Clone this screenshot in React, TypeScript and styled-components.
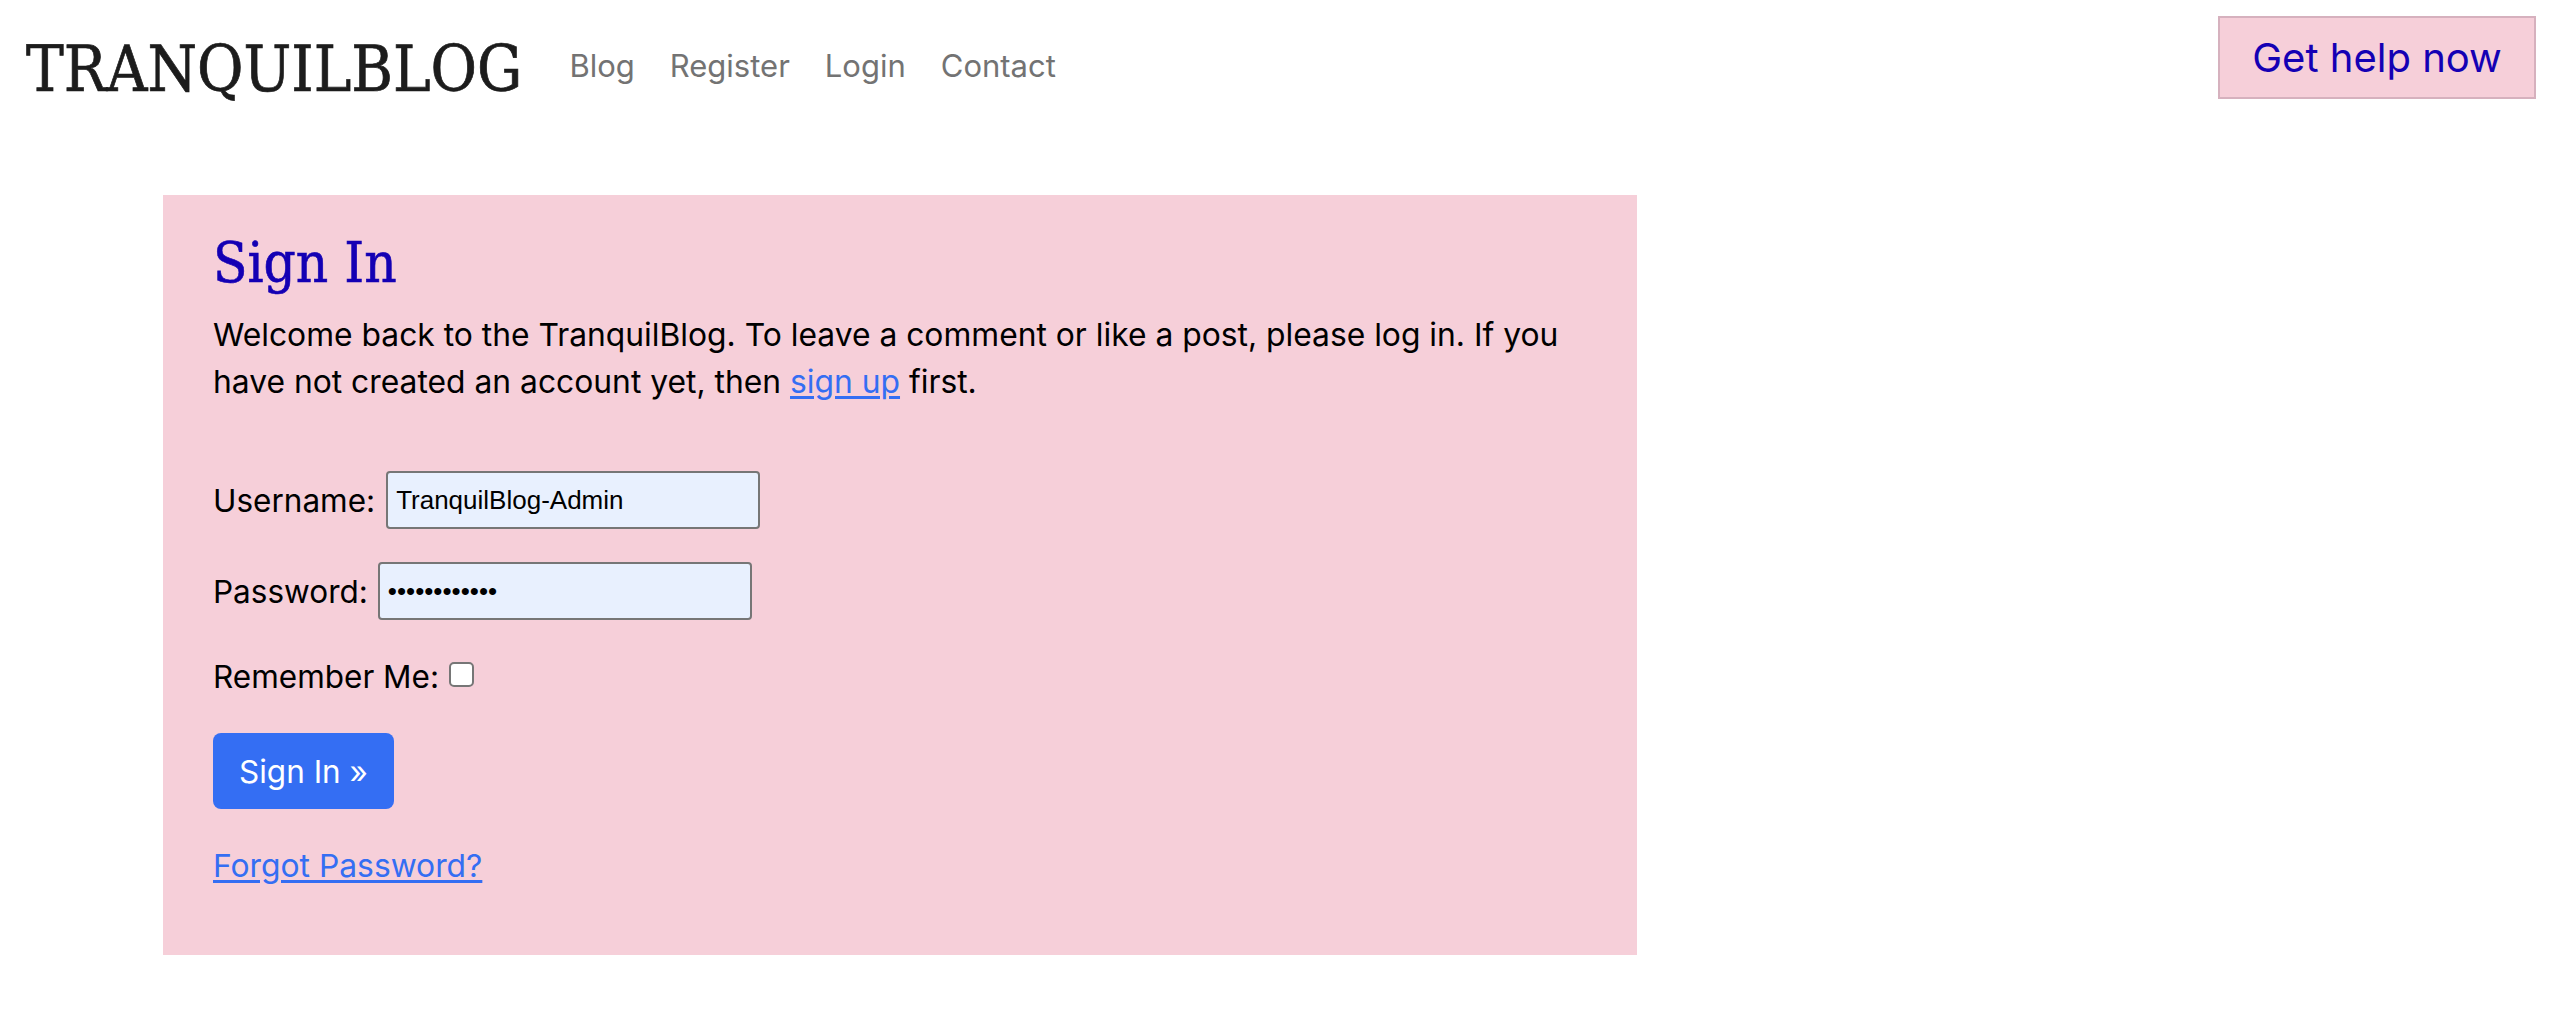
import React from "react";
import styled, { createGlobalStyle } from "styled-components";

const GlobalStyle = createGlobalStyle`
  html, body {
    margin: 0;
    padding: 0;
    background: #ffffff;
  }
  body {
    font-family: Inter, "Noto Sans", sans-serif;
    color: #000000;
  }
  * { box-sizing: border-box; }
`;

const Page = styled.div`
  width: 2559px;
  min-height: 1035px;
  display: flex;
  flex-direction: column;
`;

const Header = styled.header`
  display: flex;
  justify-content: space-between;
  align-items: flex-start;
  padding: 16px 23px 0 26px;
`;

const Brandline = styled.div`
  display: flex;
  align-items: flex-start;
`;

const Logo = styled.a`
  font-family: "DejaVu Serif Condensed", "DejaVu Serif", serif;
  font-stretch: condensed;
  font-size: 63px;
  line-height: 1;
  color: #1c1c1c;
  -webkit-text-stroke: 0.7px #1c1c1c;
  text-decoration: none;
  margin-top: 22px;
  margin-right: 47px;
  white-space: nowrap;
`;

const Nav = styled.nav`
  display: flex;
  gap: 35px;
  margin-top: 34px;
`;

const NavLink = styled.a`
  font-size: 31px;
  line-height: 1;
  color: #737373;
  text-decoration: none;
`;

const HelpButton = styled.a`
  display: flex;
  align-items: center;
  justify-content: center;
  width: 318px;
  height: 83px;
  background: #f6cfd9;
  border: 2px solid #d6b1be;
  color: #1400b4;
  font-size: 40px;
  text-decoration: none;
`;

const Main = styled.main`
  padding: 0 0 0 163px;
  margin-top: 94px;
`;

const Card = styled.section`
  width: 1474px;
  background: #f6cfd9;
  padding: 34px 50px 66px 50px;
`;

const Title = styled.h1`
  font-family: "DejaVu Serif Condensed", "DejaVu Serif", serif;
  font-stretch: condensed;
  font-weight: 400;
  font-size: 56px;
  line-height: 1.2;
  color: #1400b4;
  -webkit-text-stroke: 0.6px #1400b4;
  margin: 0 0 15px 0;
`;

const Intro = styled.p`
  font-size: 31.8px;
  line-height: 47px;
  margin: 0 0 66px 0;
`;

const TextLink = styled.a`
  color: #346ef3;
  text-decoration: underline;
  text-underline-offset: 3px;
`;

const Form = styled.form`
  display: flex;
  flex-direction: column;
  align-items: flex-start;
  gap: 33px;
`;

const FieldRow = styled.div<{ $gap?: number }>`
  display: flex;
  align-items: center;
  gap: ${(p) => p.$gap ?? 10}px;
  min-height: 47px;
`;

const Label = styled.label`
  font-size: 31.5px;
  line-height: 47px;
`;

const TextInput = styled.input`
  width: 374px;
  height: 58px;
  border: 2px solid #767676;
  border-radius: 4px;
  background: #e8f0fe;
  padding: 0 8px;
  font-family: "Liberation Sans", Arial, sans-serif;
  font-size: 26px;
  color: #000000;
  outline: none;
`;

const CheckBox = styled.input`
  appearance: none;
  width: 25px;
  height: 25px;
  margin: 0 0 5px 0;
  border: 2px solid #767676;
  border-radius: 5px;
  background: #ffffff;
`;

const SubmitButton = styled.button`
  height: 76px;
  padding: 0 26px;
  border: none;
  border-radius: 8px;
  background: #346ef3;
  color: #ffffff;
  font-family: Inter, "Noto Sans", sans-serif;
  font-size: 31.5px;
`;

const ForgotLink = styled(TextLink)`
  font-size: 31.8px;
  line-height: 47px;
`;

export default function App() {
  return (
    <Page>
      <GlobalStyle />
      <Header>
        <Brandline>
          <Logo href="#">TRANQUILBLOG</Logo>
          <Nav>
            <NavLink href="#">Blog</NavLink>
            <NavLink href="#">Register</NavLink>
            <NavLink href="#">Login</NavLink>
            <NavLink href="#">Contact</NavLink>
          </Nav>
        </Brandline>
        <HelpButton href="#">Get help now</HelpButton>
      </Header>
      <Main>
        <Card>
          <Title>Sign In</Title>
          <Intro>
            Welcome back to the TranquilBlog. To leave a comment or like a post, please log in. If you have not
            created an account yet, then <TextLink href="#">sign up</TextLink> first.
          </Intro>
          <Form onSubmit={(e) => e.preventDefault()}>
            <FieldRow $gap={11}>
              <Label htmlFor="username">Username:</Label>
              <TextInput id="username" type="text" defaultValue="TranquilBlog-Admin" />
            </FieldRow>
            <FieldRow $gap={10}>
              <Label htmlFor="password">Password:</Label>
              <TextInput id="password" type="password" defaultValue="tranquilblog" />
            </FieldRow>
            <FieldRow $gap={10}>
              <Label htmlFor="remember">Remember Me:</Label>
              <CheckBox id="remember" type="checkbox" />
            </FieldRow>
            <SubmitButton type="submit">Sign In »</SubmitButton>
            <ForgotLink href="#">Forgot Password?</ForgotLink>
          </Form>
        </Card>
      </Main>
    </Page>
  );
}
